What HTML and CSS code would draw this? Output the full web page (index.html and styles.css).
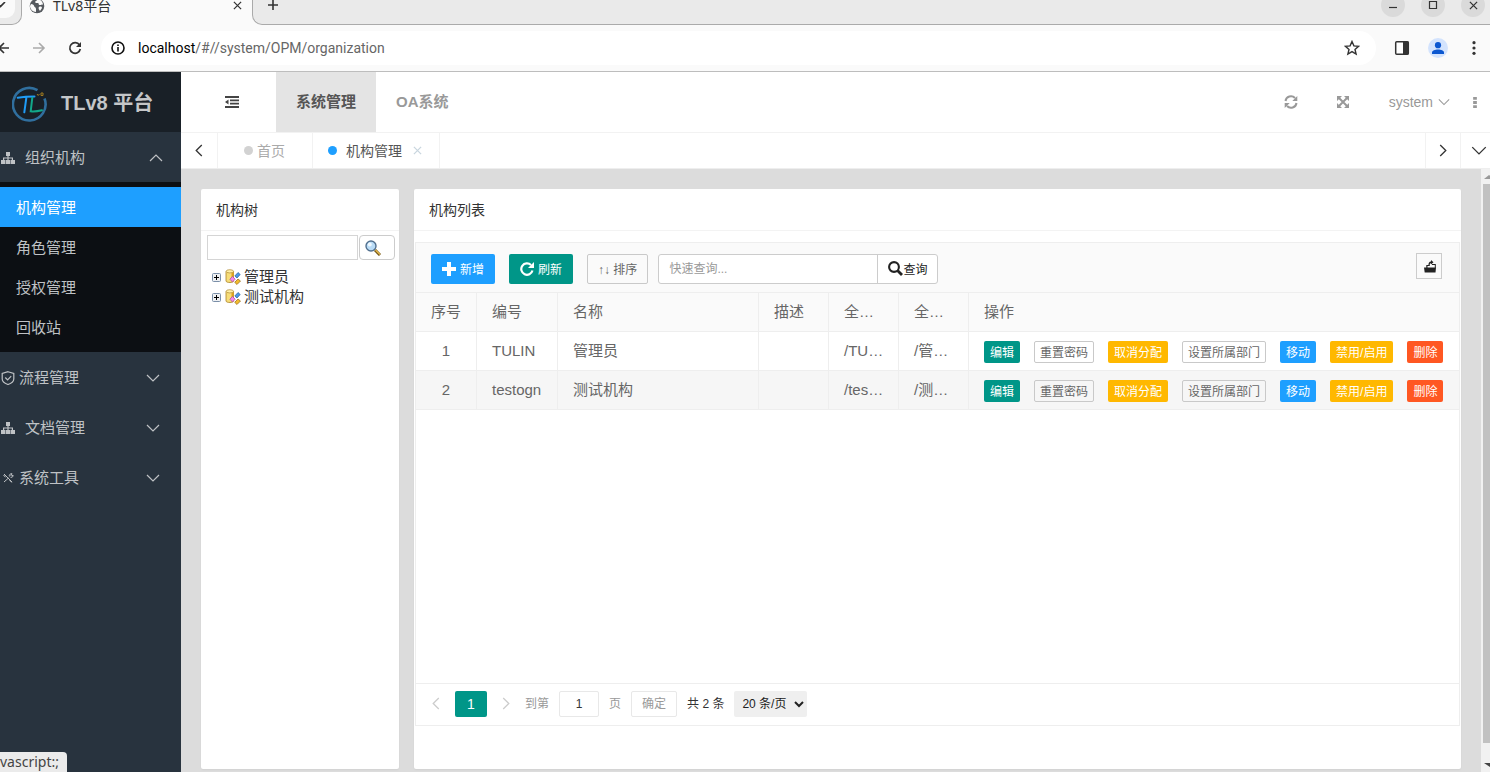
FILE: index.html
```html
<!DOCTYPE html>
<html lang="zh-CN">
<head>
<meta charset="utf-8">
<title>TLv8平台</title>
<link rel="stylesheet" href="styles.css">
</head>
<body>
<svg class="defs" aria-hidden="true">
  <symbol id="org" viewBox="0 0 14 12"><path fill="currentColor" d="M5 0h4v4H7.600v1.400H12V8h2v4H9.500V8h1.300V6.600H7.600V8H9v4H5V8h1.400V6.600H3.200V8h1.300v4H0V8h2V5.400h4.400V4H5z"/></symbol>
  <symbol id="down" viewBox="0 0 14 8"><path d="M1 1l6 6 6-6" fill="none" stroke="currentColor" stroke-width="1.200"/></symbol>
  <symbol id="up" viewBox="0 0 14 8"><path d="M1 7l6-6 6 6" fill="none" stroke="currentColor" stroke-width="1.200"/></symbol>
  <symbol id="left" viewBox="0 0 8 14"><path d="M7 1L1 7l6 6" fill="none" stroke="currentColor" stroke-width="1.400"/></symbol>
  <symbol id="right" viewBox="0 0 8 14"><path d="M1 1l6 6-6 6" fill="none" stroke="currentColor" stroke-width="1.400"/></symbol>
  <symbol id="cross" viewBox="0 0 10 10"><path d="M1 1l8 8M9 1L1 9" fill="none" stroke="currentColor" stroke-width="1.400"/></symbol>
  <symbol id="dots" viewBox="0 0 4 14"><path fill="currentColor" d="M0 1h4v3H0zM0 5.500h4v3H0zM0 10h4v3H0z"/></symbol>
  <symbol id="node" viewBox="0 0 16 16">
    <path d="M1 2.500v9.500c0 1 2 1.500 4 1.500s3.500-.5 3.500-1.500V2.500z" fill="#f7dd78" stroke="#a98228" stroke-width=".8"/>
    <path d="M6.500 3.500v9.500l2-.8V3z" fill="#e0a21a"/>
    <ellipse cx="4.800" cy="2.300" rx="3.700" ry="1.600" fill="#fff0a8" stroke="#b08a30" stroke-width=".7"/>
    <path d="M13 3.500l2.200 2-3.200 3.500-2.200-2z" fill="#4d9be8" stroke="#245c9c" stroke-width=".7"/>
    <path d="M7.500 7.500l2.700 2.700-2.700 2.700-2.700-2.700z" fill="#f08ae8" stroke="#a94aa0" stroke-width=".7"/>
    <path d="M13 10l2.500 2-3.500 3.500-2.300-2.200z" fill="#f1bb2c" stroke="#94651a" stroke-width=".7"/>
  </symbol>
  <symbol id="plusbox" viewBox="0 0 9 9"><rect x=".5" y=".5" width="8" height="8" rx="1" fill="#eef0f2" stroke="#7b8fa8"/><path d="M2 4.500h5M4.500 2v5" stroke="#000"/></symbol>
</svg>

<header class="browser">
  <div class="strip">
    <div class="prev-tab"><svg width="8" height="6" viewBox="0 0 8 6"><path d="M-1 3l1.500 1.500L5 0" fill="none" stroke="#333" stroke-width="1.600"/></svg></div>
    <div class="active-tab">
      <svg width="16" height="16" viewBox="0 0 16 16"><circle cx="8" cy="8" r="7.300" fill="#55595e"/><path d="M2 6c2 0 3 1 3 2s2 1 2 3v3c-3 0-6-3-6-6zM8 2c0 1-2 1-2 2s2 1 3 1 0 2 2 2 2-1 3 0c0-3-2-5-4-5.500zM10 9c2-1 3 0 3 1l-2 3c-1-1-2-3-1-4z" fill="#fafafa"/></svg>
      <span class="tab-title">TLv8平台</span>
      <button class="plain" aria-label="关闭标签页"><svg width="9" height="9"><use href="#cross"/></svg></button>
    </div>
    <div class="rest-strip">
      <button class="plain" aria-label="新标签页"><svg width="12" height="12" viewBox="0 0 12 12"><path d="M6 1v10M1 6h10" stroke="#333" stroke-width="1.600"/></svg></button>
      <div class="window-buttons">
        <button class="round" aria-label="最小化"><svg width="10" height="10" viewBox="0 0 10 10"><path d="M1 7.500h8" stroke="#333" stroke-width="1.200"/></svg></button>
        <button class="round" aria-label="最大化"><svg width="10" height="10" viewBox="0 0 10 10"><path d="M1.500 1.500h7v7h-7z" fill="none" stroke="#333" stroke-width="1.200"/></svg></button>
        <button class="round" aria-label="关闭"><svg width="9" height="9"><use href="#cross"/></svg></button>
      </div>
    </div>
  </div>
  <div class="navbar">
    <button class="plain back" aria-label="后退"><svg width="10" height="12" viewBox="0 0 10 12"><path d="M9 6H-1M4 1L-1 6l5 5" fill="none" stroke="#333" stroke-width="1.600"/></svg></button>
    <button class="plain forward" aria-label="前进"><svg width="14" height="12" viewBox="0 0 14 12"><path d="M1 6h11M7 1l5 5-5 5" fill="none" stroke="#aaa" stroke-width="1.600"/></svg></button>
    <button class="plain reload" aria-label="重新加载"><svg width="14" height="14" viewBox="0 0 14 14"><path d="M11.500 4A5.300 5.300 0 1 0 12.300 8" fill="none" stroke="#333" stroke-width="1.700"/><path d="M13 1v5H8z" fill="#333"/></svg></button>
    <div class="address">
      <svg width="14" height="14" viewBox="0 0 14 14"><circle cx="7" cy="7" r="6" fill="none" stroke="#111" stroke-width="1.600"/><path d="M7 6v4.500M7 3.500v1.500" stroke="#111" stroke-width="1.600"/></svg>
      <span class="url"><b>localhost</b>/#//system/OPM/organization</span>
      <svg width="16" height="16" viewBox="0 0 16 16"><path d="M8 1.500l1.900 4.400 4.700.4-3.600 3.100 1.100 4.700L8 11.600l-4.100 2.500L5 9.400 1.400 6.300l4.700-.4z" fill="none" stroke="#333" stroke-width="1.400"/></svg>
    </div>
    <svg class="panel-icon" width="16" height="16" viewBox="0 0 16 16"><rect x="1.700" y="1.700" width="12.600" height="12.600" rx="1" fill="#fff" stroke="#333" stroke-width="1.500"/><path d="M9 1.500h5.500v13H9z" fill="#333"/></svg>
    <svg class="user-icon" width="20" height="20" viewBox="0 0 20 20"><circle cx="10" cy="10" r="10" fill="#d3e3fd"/><circle cx="10" cy="7.200" r="3.100" fill="#0b57d0"/><path d="M4 16v-1.500c0-4 12-4 12 0V16z" fill="#0b57d0"/></svg>
    <svg width="4" height="14" viewBox="0 0 4 14"><circle cx="2" cy="1.700" r="1.600" fill="#333"/><circle cx="2" cy="7" r="1.600" fill="#333"/><circle cx="2" cy="12.300" r="1.600" fill="#333"/></svg>
  </div>
</header>

<div class="app">
  <aside class="sidebar">
    <div class="brand">
      <svg width="36" height="40" viewBox="0 -3 36 40"><path d="M25.500 4.200A16.300 16.300 0 1 0 32.500 12.500" fill="none" stroke="#306f9e" stroke-width="2.600"/><path d="M5.700 11.700c5-.8 10-1.200 16.800-1.200M14.300 12l-2 14.300" fill="none" stroke="#1f9bf5" stroke-width="2" stroke-linecap="round"/><path d="M20.300 11.700l-1.600 13.600c3 .4 7 0 11.300-1" fill="none" stroke="#12a88a" stroke-width="2" stroke-linecap="round"/><path d="M25 8l1.200 1.500L27.500 8M29 7h2v2.500h-2z" fill="none" stroke="#a07a20"/></svg>
      <span>TLv8 平台</span>
    </div>
    <nav>
      <a class="item" href="#"><svg width="14" height="12"><use href="#org"/></svg><span class="wide">组织机构</span><svg class="arrow open" width="14" height="8"><use href="#up"/></svg></a>
      <div class="submenu">
        <a class="current" href="#">机构管理</a><a href="#">角色管理</a><a href="#">授权管理</a><a href="#">回收站</a>
      </div>
      <a class="item" href="#"><svg width="14" height="14" viewBox="0 0 14 14"><path d="M7 .7l5.800 1.800V8c0 3-2.800 4.500-5.800 5.500C4 12.500 1.200 11 1.200 8V2.500zM4.300 6.500l2.300 2.300 3.600-3.600" fill="none" stroke="currentColor" stroke-width="1.200"/></svg><span>流程管理</span><svg class="arrow" width="14" height="8"><use href="#down"/></svg></a>
      <a class="item" href="#"><svg width="14" height="12"><use href="#org"/></svg><span class="wide">文档管理</span><svg class="arrow" width="14" height="8"><use href="#down"/></svg></a>
      <a class="item" href="#"><svg width="14" height="12" viewBox="0 0 14 12"><path d="M3 2l8 8M3 10L7.500 6M8.500 4.500c-.8-1.500.7-3 2.500-2.800l-1.200 1.500.8.900L12 3c.3 1.800-1.200 3-2.500 2.300M2.500 3l2 2.300M8.500 8l2.300 2.500" fill="none" stroke="currentColor"/></svg><span>系统工具</span><svg class="arrow" width="14" height="8"><use href="#down"/></svg></a>
    </nav>
  </aside>

  <div class="main">
    <div class="topbar">
      <button class="plain fold" aria-label="收起菜单"><svg width="14" height="12" viewBox="0 0 14 12"><path d="M0 1h14M5 4.300h9M5 7.600h9M0 11h14" stroke="#444" stroke-width="1.800"/><path d="M3.500 3.500v5L0 6z" fill="#444"/></svg></button>
      <a class="module active" href="#">系统管理</a>
      <a class="module" href="#">OA系统</a>
      <div class="tools">
        <button class="plain" aria-label="刷新"><svg width="14" height="14" viewBox="0 0 14 14"><path d="M1.500 6A5.500 5.500 0 0 1 11 3M12.500 8A5.500 5.500 0 0 1 3 11" fill="none" stroke="currentColor" stroke-width="2"/><path d="M13.300 1v5h-5zM.7 13V8h5z" fill="currentColor"/></svg></button>
        <button class="plain" aria-label="全屏"><svg width="14" height="14" viewBox="0 0 14 14"><path d="M2 2l10 10M12 2L2 12" stroke="currentColor" stroke-width="2"/><path d="M1 1h5L1 6zM13 1v5L8 1zM1 13V8l5 5zM13 13H8l5-5z" fill="currentColor"/></svg></button>
        <button class="plain user">system<svg width="12" height="8"><use href="#down"/></svg></button>
        <button class="plain" aria-label="更多"><svg width="4" height="13"><use href="#dots"/></svg></button>
      </div>
    </div>
    <div class="pagetabs">
      <button class="plain step" aria-label="左移"><svg width="8" height="13"><use href="#left"/></svg></button>
      <a class="ptab home" href="#"><i class="dot"></i>首页</a>
      <a class="ptab here" href="#"><i class="dot"></i>机构管理<svg width="9" height="9"><use href="#cross"/></svg></a>
      <button class="plain step end" aria-label="右移"><svg width="8" height="13"><use href="#right"/></svg></button>
      <button class="plain step last" aria-label="标签菜单"><svg width="16" height="9"><use href="#down"/></svg></button>
    </div>
    <div class="body">
      <div class="cards">
        <section class="card tree-card">
          <h2>机构树</h2>
          <form class="tree-search">
            <input type="text" aria-label="搜索机构">
            <button type="button" aria-label="搜索"><svg width="16" height="16" viewBox="0 0 16 16"><path d="M10 10l5 5" stroke="#6f5316" stroke-width="3"/><path d="M10.500 10l4.500 4.500" stroke="#e5b84d" stroke-width="1.400"/><circle cx="6" cy="6" r="5" fill="#b9dcf7" stroke="#52708f" stroke-width="1.400"/><circle cx="4.800" cy="4.500" r="2" fill="#eef8ff"/></svg></button>
          </form>
          <ul class="tree">
            <li><svg width="9" height="9"><use href="#plusbox"/></svg><svg width="16" height="16"><use href="#node"/></svg><span>管理员</span></li>
            <li><svg width="9" height="9"><use href="#plusbox"/></svg><svg width="16" height="16"><use href="#node"/></svg><span>测试机构</span></li>
          </ul>
        </section>
        <section class="card list-card">
          <h2>机构列表</h2>
          <div class="grid">
            <div class="toolbar">
              <button class="tool blue"><svg width="14" height="14" viewBox="0 0 14 14"><path d="M7 0v14M0 7h14" stroke="#fff" stroke-width="4"/></svg><span>新增</span></button>
              <button class="tool green"><svg width="14" height="14" viewBox="0 0 14 14"><path d="M11 3A5.700 5.700 0 1 0 12.500 8.500" fill="none" stroke="#fff" stroke-width="2.200"/><path d="M14 0v6H8z" fill="#fff"/></svg><span>刷新</span></button>
              <button class="tool outline"><span>↑↓ 排序</span></button>
              <div class="search">
                <input type="text" placeholder="快速查询..." aria-label="快速查询">
                <button><svg width="15" height="15" viewBox="0 0 15 15"><circle cx="6" cy="6" r="4.900" fill="none" stroke="#222" stroke-width="2.100"/><path d="M9.500 9.500l4.500 4.500" stroke="#222" stroke-width="2.800"/></svg><span>查询</span></button>
              </div>
              <button class="export" aria-label="导出"><svg width="14" height="14" viewBox="0 0 14 14"><path d="M1 8.500h12l-.5 5H1.700zM3.300 6h3v1H4.500v2h-1.200zM9 5h3.800v4h-1V6H9z" fill="#222"/><path d="M5.500 7c-.3-3 .7-4.300 2.500-4.500V1l2.500 2.300L8 5.500V4.200C7 4.500 6.500 5.200 6.700 7z" fill="#222"/></svg></button>
            </div>
            <table>
              <colgroup><col class="c-no"><col class="c-code"><col class="c-name"><col class="c-s"><col class="c-s"><col class="c-s"><col></colgroup>
              <thead><tr><th>序号</th><th>编号</th><th>名称</th><th>描述</th><th>全编号</th><th>全名称</th><th>操作</th></tr></thead>
              <tbody>
                <tr><td class="num">1</td><td>TULIN</td><td>管理员</td><td></td><td>/TULIN</td><td>/管理员</td><td><div class="ops"><button class="green">编辑</button><button class="outline">重置密码</button><button class="amber">取消分配</button><button class="outline">设置所属部门</button><button class="blue">移动</button><button class="amber">禁用/启用</button><button class="red">删除</button></div></td></tr>
                <tr><td class="num">2</td><td>testogn</td><td>测试机构</td><td></td><td>/testogn</td><td>/测试机构</td><td><div class="ops"><button class="green">编辑</button><button class="outline">重置密码</button><button class="amber">取消分配</button><button class="outline">设置所属部门</button><button class="blue">移动</button><button class="amber">禁用/启用</button><button class="red">删除</button></div></td></tr>
              </tbody>
            </table>
            <div class="pager">
              <button class="plain turn" aria-label="上一页"><svg width="8" height="13"><use href="#left"/></svg></button>
              <span class="page-now">1</span>
              <button class="plain turn next" aria-label="下一页"><svg width="8" height="13"><use href="#right"/></svg></button>
              <label for="page">到第</label>
              <input id="page" type="text" value="1">
              <span class="muted">页</span>
              <button class="confirm">确定</button>
              <span>共 2 条</span>
              <select aria-label="每页条数"><option>20 条/页</option></select>
            </div>
          </div>
        </section>
      </div>
      <div class="scrollbar" aria-hidden="true">
        <svg width="9" height="15" viewBox="0 0 9 15"><path d="M3 10l5-4 5 4z" fill="#999"/></svg>
        <div class="thumb"></div>
        <svg width="9" height="29" viewBox="0 0 9 29"><path d="M3 20h11l-5 4z" fill="#444"/></svg>
      </div>
    </div>
  </div>
</div>
<div class="status">vascript:;</div>
</body>
</html>
```
FILE: styles.css
```css
* { box-sizing: border-box; }
html, body { height: 100%; }
body {
  margin: 0;
  display: flex;
  flex-direction: column;
  overflow: hidden;
  font: 14px/20px "Liberation Sans", "Noto Sans CJK SC", sans-serif;
  color: #333;
}
button, input, select { font: inherit; margin: 0; }
svg { display: block; flex: none; }
a { color: inherit; text-decoration: none; }
.defs { position: absolute; width: 0; height: 0; }
.plain { border: 0; padding: 0; background: none; color: inherit; display: flex; align-items: center; justify-content: center; }

/* browser frame */
.browser { background: #fafafa; border-bottom: 1px solid #bdbdbd; font-family: "Noto Sans", "Noto Sans CJK SC", sans-serif; flex: none; }
.strip { display: flex; height: 25px; }
.prev-tab { width: 22px; background: #fafafa; border: solid #aaa; border-width: 0 1px 1px 0; border-radius: 0 0 10px 0; box-shadow: inset -6px -6px #eaeaea; padding-top: 2px; }
.active-tab { width: 230px; display: flex; align-items: center; gap: 8px; padding: 0 10px 14px 7px; }
.tab-title { flex: 1; }
.rest-strip { flex: 1; display: flex; align-items: center; justify-content: space-between; background: #eaeaea; border: solid #aaa; border-width: 0 0 1px 1px; border-radius: 0 0 0 10px; padding: 0 5px 14px 14px; }
.window-buttons { display: flex; gap: 16px; }
.round { width: 24px; height: 24px; border: 0; border-radius: 50%; padding: 0; background: #dadada; color: #333; display: flex; align-items: center; justify-content: center; }
.navbar { display: flex; align-items: center; height: 46px; padding-right: 14px; }
.back { width: 10px; }
.forward { margin-left: 22px; }
.reload { margin-left: 22px; }
.address { flex: 1; display: flex; align-items: center; gap: 13px; height: 34px; margin-left: 19px; padding: 0 16px 0 10px; border-radius: 17px; background: #fff; }
.url { flex: 1; color: #666; font-family: Roboto, sans-serif; }
.url b { font-weight: normal; color: #000; }
.panel-icon { margin-left: 18px; }
.user-icon { margin: 0 24px 0 18px; }

.app { flex: 1; display: flex; min-height: 0; }

/* sidebar */
.sidebar { width: 181px; flex: none; background: #28333e; color: #bfc2c5; font-size: 15px; }
.brand { display: flex; align-items: center; gap: 13px; height: 60px; padding: 2px 12px 0; background: #192027; font-size: 20px; font-weight: bold; color: #c4c6c8; white-space: nowrap; }
.item { display: flex; align-items: center; gap: 4px; height: 50px; padding: 1px 21px 0 1px; }
.item span { flex: 1; }
.item .wide { padding-left: 6px; }
.arrow.open { margin-right: -3px; }
.submenu { background: #0c0f13; padding: 5px 0; }
.submenu a { display: block; padding: 2px 16px 0; line-height: 38px; }
.submenu .current { background: #1e9fff; color: #fff; }

/* header */
.main { flex: 1; display: flex; flex-direction: column; min-width: 0; background: #fff; }
.topbar { display: flex; flex: none; height: 61px; border-bottom: 1px solid #f2f2f2; }
.fold { width: 95px; padding-left: 7px; }
.module { padding: 0 20px; font-size: 15px; font-weight: bold; line-height: 60px; color: #999; }
.module.active { background: #e4e4e4; color: #555; }
.tools { margin-left: auto; display: flex; color: #999; padding-right: 13px; }
.tools .plain + .plain { margin-left: 38px; }
.tools .plain + .user { margin-left: 39px; }
.tools .user { gap: 5px; }
.tools .user + .plain { margin-left: 23px; }
.pagetabs { display: flex; flex: none; height: 36px; border-bottom: 1px solid #eee; }
.step { width: 37px; border-right: 1px solid #f2f2f2; }
.step.end { margin-left: auto; width: 36px; border: solid #f2f2f2; border-width: 0 1px; }
.step.last { width: 29px; border: 0; padding-left: 6px; }
.ptab { display: flex; align-items: center; border-right: 1px solid #f2f2f2; color: #aaa; }
.dot { width: 9px; height: 9px; border-radius: 50%; background: #d2d2d2; }
.home { gap: 4px; padding: 0 27px 0 26px; }
.here { gap: 9px; padding: 0 17px 0 15px; color: #555; }
.here .dot { background: #1e9fff; }
.here svg { color: #c9d6df; margin-left: 2px; }

/* content */
.body { flex: 1; display: flex; min-height: 0; background: #dcdcdc; }
.cards { flex: 1; min-width: 0; display: flex; gap: 15px; padding: 20px 20px 3px; }
.card { background: #fff; border-radius: 2px; box-shadow: 0 1px 2px #0000000d; display: flex; flex-direction: column; }
.card h2 { margin: 0; padding: 2px 15px 0; font-size: 14px; font-weight: normal; line-height: 39px; border-bottom: 1px solid #f3f3f3; }
.tree-card { width: 198px; flex: none; }
.list-card { flex: 1; min-width: 0; }
.tree-search { display: flex; gap: 1px; padding: 4px 4px 0 6px; }
.tree-search input { flex: 1; min-width: 0; height: 25px; border: 1px solid #d5d5d5; }
.tree-search button { width: 36px; height: 25px; border: 1px solid #ccc; border-radius: 4px; padding: 0 5px; background: #fff; }
.tree { list-style: none; margin: 0; padding: 7px 11px; font-size: 15px; }
.tree li { display: flex; align-items: center; gap: 4px; height: 20px; }
.tree span { margin-left: -1px; }

.grid { flex: 1; display: flex; flex-direction: column; margin: 11px 1px 43px; border: 1px solid #eee; }
.toolbar { display: flex; align-items: center; height: 50px; padding: 2px 17px 0 15px; background: #fafafa; border-bottom: 1px solid #eee; font-size: 12px; }
.toolbar span { padding-top: 2px; }
.tool { display: flex; align-items: center; gap: 4px; height: 30px; padding: 0 10px; border: 1px solid transparent; border-radius: 2px; color: #fff; margin-right: 14px; }
.tool.outline { margin-right: 10px; }
.blue { background: #1e9fff; }
.green { background: #009688; }
.amber { background: #ffb800; }
.red { background: #ff5722; }
.grid .outline { background: transparent; border-color: #c9c9c9; color: #666; }
.search { display: flex; height: 30px; border: 1px solid #ccc; border-radius: 3px; background: #fff; overflow: hidden; }
.search input { width: 219px; border: 0; border-right: 1px solid #ccc; padding: 0 10px; background: none; }
.search input::placeholder { color: #999; }
.search button { display: flex; align-items: center; border: 0; padding: 0 10px; background: none; color: #222; }
.export { width: 26px; height: 26px; margin: 0 0 6px auto; border: 1px solid #ccc; padding: 0 0 0 6px; background: none; }

table { width: 100%; border-collapse: separate; border-spacing: 0; table-layout: fixed; font-size: 15px; color: #666; }
.c-no { width: 61px; }
.c-code { width: 81px; }
.c-name { width: 201px; }
.c-s { width: 70px; }
th, td { height: 39px; padding: 0 13px 0 15px; border: solid #eee; border-width: 0 1px 1px 0; font-weight: normal; text-align: left; white-space: nowrap; overflow: hidden; text-overflow: ellipsis; }
th { background: #fafafa; }
th:last-child, td:last-child { border-right: 0; padding-right: 0; }
td.num { padding: 0 15px; text-align: center; }
tbody tr:nth-child(2) { background: #f6f6f6; }
.ops { display: flex; gap: 14px; padding-top: 2px; }
.ops button { height: 22px; padding: 2px 5px 0; border: 1px solid transparent; border-radius: 2px; color: #fff; font-size: 12px; line-height: 18px; }

.pager { display: flex; align-items: center; gap: 10px; margin-top: auto; height: 42px; padding: 0 15px 2px; border-top: 1px solid #eee; font-size: 12px; }
.turn { width: 10px; color: #ccc; }
.turn.next { margin: 0 4px; }
.page-now { width: 32px; line-height: 26px; margin-left: 4px; text-align: center; background: #009688; color: #fff; border-radius: 2px; font-size: 14px; }
.pager label, .muted { color: #999; }
.pager input { width: 40px; height: 26px; border: 1px solid #e8e8e8; border-radius: 2px; padding: 0; text-align: center; color: #333; }
.confirm { height: 26px; padding: 0 10px; border: 1px solid #e8e8e8; border-radius: 2px; background: #fff; color: #999; }
.pager select { height: 26px; border: 0; border-radius: 2px; padding: 0 4px; background-color: #efefef; color: #222; }

.scrollbar { width: 9px; display: flex; flex-direction: column; background: #f1f1f1; flex: none; }
.thumb { flex: 1; margin-left: 2px; background: #c1c1c1; }

/* link status bubble */
.status { position: absolute; left: 0; bottom: 0; height: 20px; padding: 0 8px 0 0; border-radius: 0 4px 0 0; background: #ebebeb; color: #444; font-family: "Noto Sans", sans-serif; }
```
